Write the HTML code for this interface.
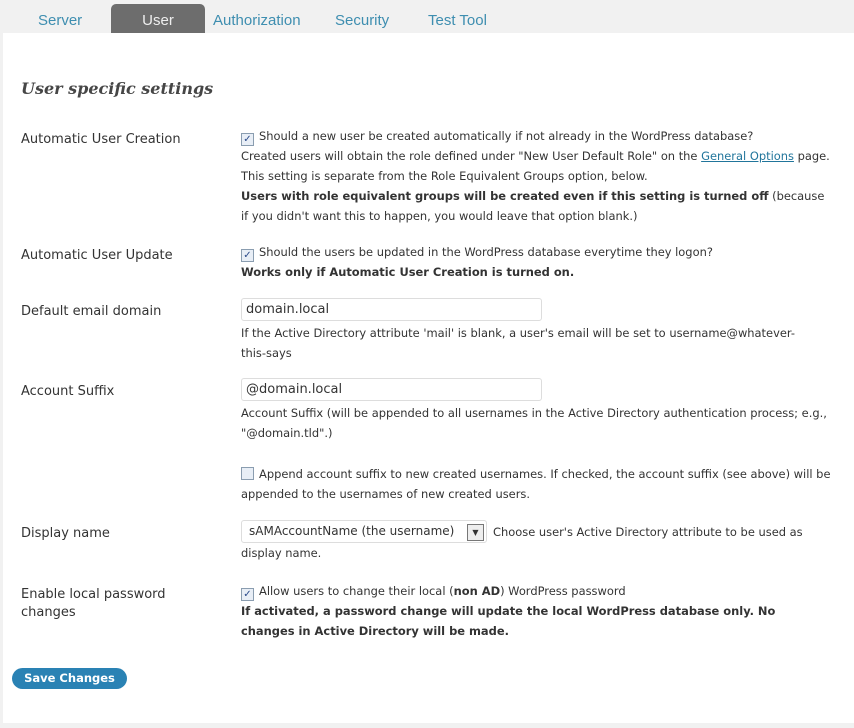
<!DOCTYPE html>
<html><head><meta charset="utf-8"><style>
body{margin:0;width:854px;height:728px;background:#f1f1f1;font-family:"DejaVu Sans","Liberation Sans",sans-serif;color:#333;position:relative;overflow:hidden}
#content{position:absolute;left:3px;top:33px;width:851px;height:690px;background:#fff}
.tab{position:absolute;top:4px;height:29px;line-height:33px;font-family:"Liberation Sans",sans-serif;font-size:15px;color:#3e8eb0}
.tab.act{background:#6d6d6d;color:#eee;border-radius:5px 5px 0 0;text-align:center;left:111px;width:94px}
.a{position:absolute;white-space:nowrap}
.l{left:21px;font-size:13px;color:#333}
.d{left:241px;font-size:11.45px;line-height:20px;color:#333}
b{color:#333}
.cb{display:inline-block;width:11px;height:11px;border:1px solid #8a9db0;background:#e8eef6;vertical-align:-2px;margin-right:5px;position:relative;font-size:10px;line-height:11px;text-align:center;color:#2a4a8a}
.in{position:absolute;left:241px;border:1px solid #ddd;border-radius:3px;font-size:13px;line-height:21px;padding-left:4px;box-sizing:border-box;width:301px;height:23px}
a{color:#21759b;text-decoration:underline}
</style></head><body>
<div class="tab" style="left:38px">Server</div>
<div class="tab act">User</div>
<div class="tab" style="left:213px">Authorization</div>
<div class="tab" style="left:335px">Security</div>
<div class="tab" style="left:428px">Test Tool</div>
<div id="content"></div>
<div class="a" style="left:21px;top:79px;font-family:'DejaVu Serif',serif;font-style:italic;font-weight:bold;font-size:16px;color:#464646">User specific settings</div>

<div class="a l" style="top:132px">Automatic User Creation</div>
<div class="a d" style="top:126px"><span class="cb">✓</span>Should a new user be created automatically if not already in the WordPress database?<br>Created users will obtain the role defined under "New User Default Role" on the <a>General Options</a> page.<br>This setting is separate from the Role Equivalent Groups option, below.<br><b>Users with role equivalent groups will be created even if this setting is turned off</b> (because<br>if you didn't want this to happen, you would leave that option blank.)</div>

<div class="a l" style="top:248px">Automatic User Update</div>
<div class="a d" style="top:242px"><span class="cb">✓</span>Should the users be updated in the WordPress database everytime they logon?<br><b>Works only if Automatic User Creation is turned on.</b></div>

<div class="a l" style="top:304px">Default email domain</div>
<div class="in" style="top:298px">domain.local</div>
<div class="a d" style="top:323px">If the Active Directory attribute 'mail' is blank, a user's email will be set to username@whatever-<br>this-says</div>

<div class="a l" style="top:384px">Account Suffix</div>
<div class="in" style="top:378px">@domain.local</div>
<div class="a d" style="top:403px">Account Suffix (will be appended to all usernames in the Active Directory authentication process; e.g.,<br>"@domain.tld".)</div>
<div class="a d" style="top:464px"><span class="cb"></span>Append account suffix to new created usernames. If checked, the account suffix (see above) will be<br>appended to the usernames of new created users.</div>

<div class="a l" style="top:526px">Display name</div>
<div class="in" style="top:520px;width:246px;font-size:12px;padding-left:7px">sAMAccountName (the username)<span style="position:absolute;right:2px;top:3px;width:15px;height:15px;border:1px solid #777;background:#eee;font-size:8px;line-height:15px;text-align:center">▼</span></div>
<div class="a d" style="top:522px;left:493px">Choose user's Active Directory attribute to be used as</div>
<div class="a d" style="top:543px">display name.</div>

<div class="a l" style="top:586px;line-height:18px">Enable local password<br>changes</div>
<div class="a d" style="top:581px"><span class="cb">✓</span>Allow users to change their local (<b>non AD</b>) WordPress password<br><b>If activated, a password change will update the local WordPress database only. No<br>changes in Active Directory will be made.</b></div>

<div class="a" style="left:12px;top:668px;width:115px;height:21px;border-radius:11px;background:#2a82b4;color:#fff;font-weight:bold;font-size:11.5px;line-height:21px;text-align:center">Save Changes</div>
</body></html>
